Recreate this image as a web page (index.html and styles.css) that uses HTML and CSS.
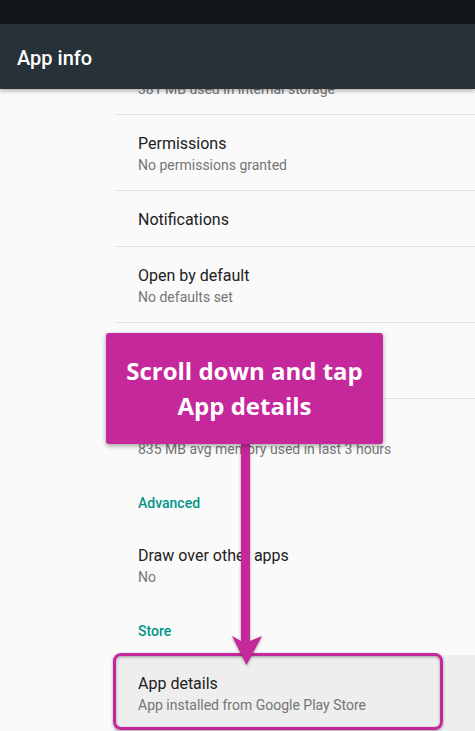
FILE: index.html
```html
<!DOCTYPE html>
<html lang="en">
<head>
  <meta charset="UTF-8">
  <meta name="viewport" content="width=device-width, initial-scale=1.0">
  <title>App info</title>
  <link rel="stylesheet" href="styles.css">
</head>
<body>
  <div class="screen">
    <div class="status-bar"></div>

    <header class="toolbar">
      <h1>App info</h1>
    </header>

    <!-- Settings list, scrolled a little past the first row -->
    <div class="content">
      <ul class="prefs">
        <li class="pref">
          <div class="pref-title">Storage</div>
          <div class="pref-summary">381 MB used in internal storage</div>
        </li>
        <li class="pref">
          <div class="pref-title">Permissions</div>
          <div class="pref-summary">No permissions granted</div>
        </li>
        <li class="pref">
          <div class="pref-title">Notifications</div>
        </li>
        <li class="pref">
          <div class="pref-title">Open by default</div>
          <div class="pref-summary">No defaults set</div>
        </li>
        <li class="pref">
          <div class="pref-title">Battery</div>
          <div class="pref-summary">No battery use since last full charge</div>
        </li>
        <li class="pref last">
          <div class="pref-title">Memory</div>
          <div class="pref-summary">835 MB avg memory used in last 3 hours</div>
        </li>
        <li class="category">Advanced</li>
        <li class="pref last">
          <div class="pref-title">Draw over other apps</div>
          <div class="pref-summary">No</div>
        </li>
        <li class="category">Store</li>
        <li class="pref last pressed">
          <div class="pref-title">App details</div>
          <div class="pref-summary">App installed from Google Play Store</div>
        </li>
      </ul>
    </div>

    <!-- Tutorial annotation -->
    <div class="highlight"></div>
    <svg class="arrow" width="50" height="240" viewBox="225 436 50 240">
      <path d="M241 440 V641 L232 636 L246.5 665 L262 636 L250 641 V440 Z" fill="#c5289b"/>
    </svg>
    <div class="callout">Scroll down and tap<br>App details</div>
  </div>
</body>
</html>
```

FILE: styles.css
```css
/* Basic Reset */
* {
  margin: 0;
  padding: 0;
  box-sizing: border-box;
}

body {
  background-color: #fafafa;
  font-family: Roboto, "Noto Sans", Arial, sans-serif;
}

.screen {
  position: relative;
  width: 475px;
  height: 731px;
  overflow: hidden;
  background-color: #fafafa;
}

.status-bar {
  height: 24px;
  background-color: #131719;
}

.toolbar {
  position: relative;
  z-index: 2;
  height: 65px;
  padding-left: 17px;
  display: flex;
  align-items: center;
  background-color: #263238;
  box-shadow: 0 2px 4px rgba(0, 0, 0, 0.3);
}

.toolbar h1 {
  font-size: 20px;
  font-weight: 500;
  color: #fff;
  padding-top: 2px;
}

.content {
  position: relative;
  z-index: 1;
}

.prefs {
  list-style: none;
  margin-top: -50px;
}

.pref {
  margin-left: 114px;
  padding: 18px 0 15px 24px;
  border-bottom: 1px solid #e3e3e3;
}

.pref.last {
  border-bottom: none;
  padding-bottom: 16px;
}

.pref.pressed {
  background-color: #eeeeee;
  padding-bottom: 20px;
}

.pref-title {
  font-size: 16px;
  line-height: 22px;
  color: #212121;
}

.pref-summary {
  font-size: 14px;
  line-height: 20px;
  color: #757575;
}

.category {
  margin-left: 114px;
  padding: 18px 0 14px 24px;
  font-size: 14px;
  font-weight: 500;
  line-height: 20px;
  color: #009688;
}

/* Annotation overlay */
.callout {
  position: absolute;
  z-index: 5;
  left: 106px;
  top: 333px;
  width: 277px;
  height: 111px;
  padding-top: 20px;
  background-color: #c5289b;
  border-radius: 3px;
  box-shadow: 0 2px 5px rgba(0, 0, 0, 0.35);
  color: #fff;
  font-family: "Open Sans", Arial, sans-serif;
  font-weight: 700;
  font-size: 24px;
  line-height: 35px;
  text-align: center;
}

.arrow {
  position: absolute;
  z-index: 4;
  left: 225px;
  top: 436px;
  filter: drop-shadow(0 1px 1.5px rgba(0, 0, 0, 0.35));
}

.highlight {
  position: absolute;
  z-index: 3;
  left: 113px;
  top: 653px;
  width: 330px;
  height: 77px;
  border: 3px solid #c5289b;
  border-radius: 8px;
  box-shadow: 0 1px 3px rgba(0, 0, 0, 0.35), inset 0 1px 3px rgba(0, 0, 0, 0.35);
}
```
